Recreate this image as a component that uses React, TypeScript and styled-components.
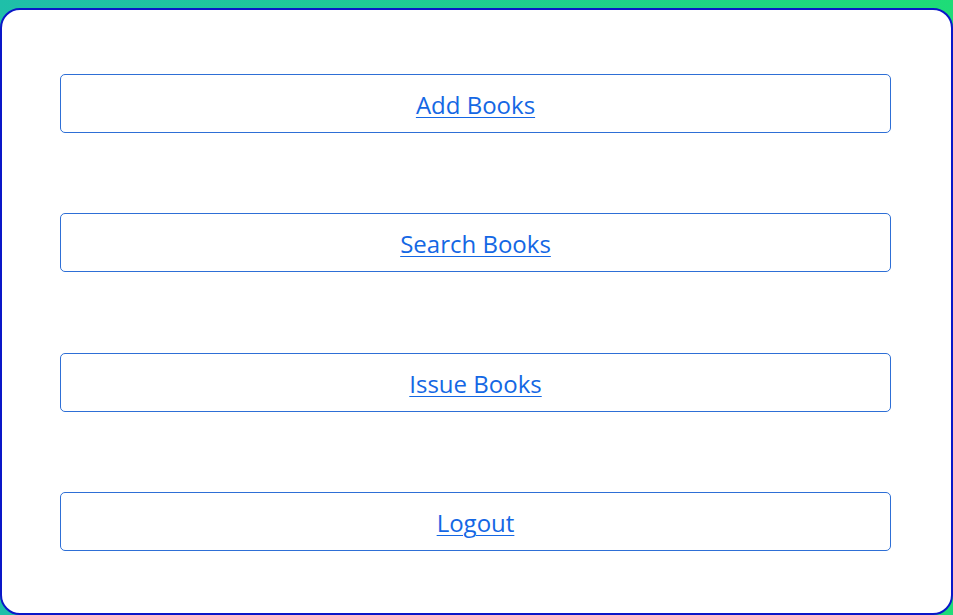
import React from "react";
import styled, { createGlobalStyle } from "styled-components";

const Global = createGlobalStyle`
  html, body { margin: 0; padding: 0; }
  body {
    width: 953px;
    height: 615px;
    overflow: hidden;
    background: linear-gradient(to right, #1fbfa9, #1edc77);
    font-family: "Open Sans", "Noto Sans", sans-serif;
  }
`;

const Page = styled.div`
  padding-top: 8px;
  height: 615px;
  box-sizing: border-box;
`;

const Card = styled.div`
  height: 607px;
  box-sizing: border-box;
  background: #ffffff;
  border: 2px solid #0a17c8;
  border-radius: 20px;
  padding: 64px 60px 0 58px;
  display: flex;
  flex-direction: column;
  gap: 80.4px;
`;

const MenuButton = styled.a`
  display: flex;
  align-items: center;
  justify-content: center;
  height: 59px;
  box-sizing: border-box;
  border: 1px solid #2e6fd6;
  border-radius: 5px;
  color: #1467e4;
  font-size: 24px;
  font-weight: 400;
  text-decoration: underline;
  text-underline-offset: 3px;
  text-decoration-thickness: 1px;
  padding-top: 2px;
  cursor: pointer;
`;

const items = ["Add Books", "Search Books", "Issue Books", "Logout"];

export default function App() {
  return (
    <>
      <Global />
      <Page>
        <Card>
          {items.map((t) => (
            <MenuButton key={t} href="#">
              {t}
            </MenuButton>
          ))}
        </Card>
      </Page>
    </>
  );
}
